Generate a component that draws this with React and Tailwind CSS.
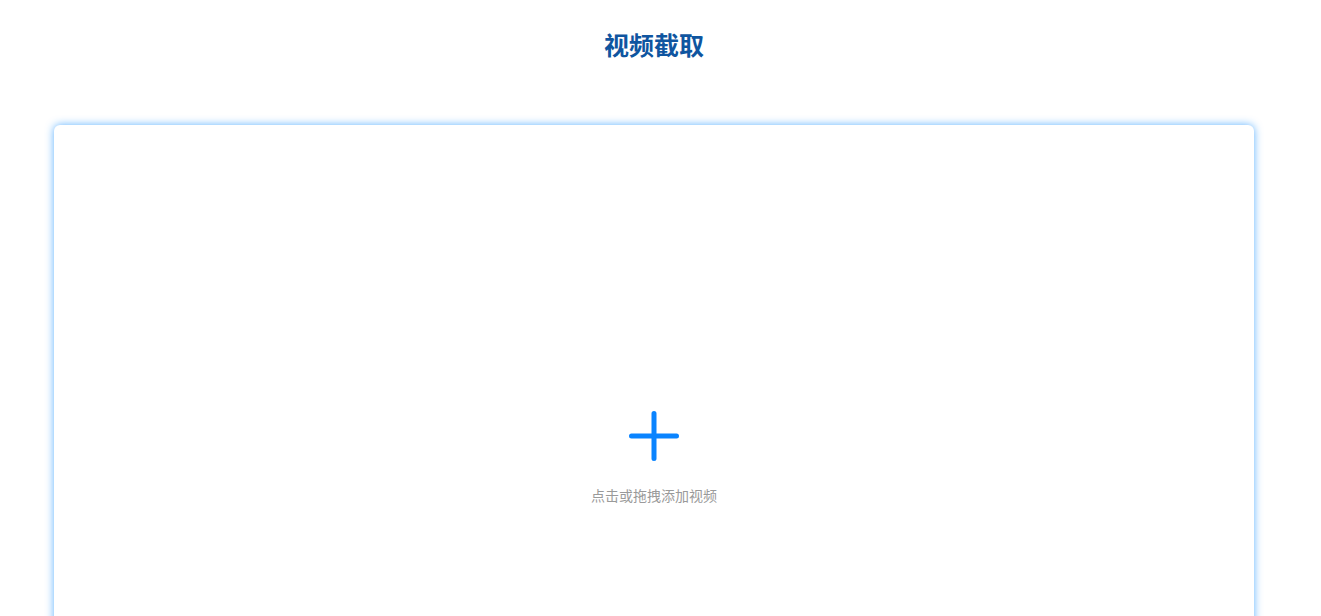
export default function App() {
  return (
    <div className="min-h-screen w-[1308px] bg-white" style={{ fontFamily: '"Noto Sans CJK SC", "Noto Sans", sans-serif' }}>
      <h1 className="pt-[28px] text-center text-[25px] leading-8 font-bold text-[#0f55a0]">视频截取</h1>

      {/* upload area */}
      <div className="mx-auto mt-[65px] h-[600px] w-[1200px] rounded-md bg-white shadow-[0_0_9px_rgba(24,144,255,0.7)]">
        <div className="flex cursor-pointer flex-col items-center pt-[286px]">
          <svg className="h-[50px] w-[50px]" viewBox="0 0 50 50" fill="none" stroke="#0a84ff" strokeWidth={5} strokeLinecap="round">
            <path d="M25 2.5v45M2.5 25h45" />
          </svg>
          <p className="mt-[24px] text-sm leading-5 text-[#9a9a9a]">点击或拖拽添加视频</p>
        </div>
      </div>
    </div>
  );
}
